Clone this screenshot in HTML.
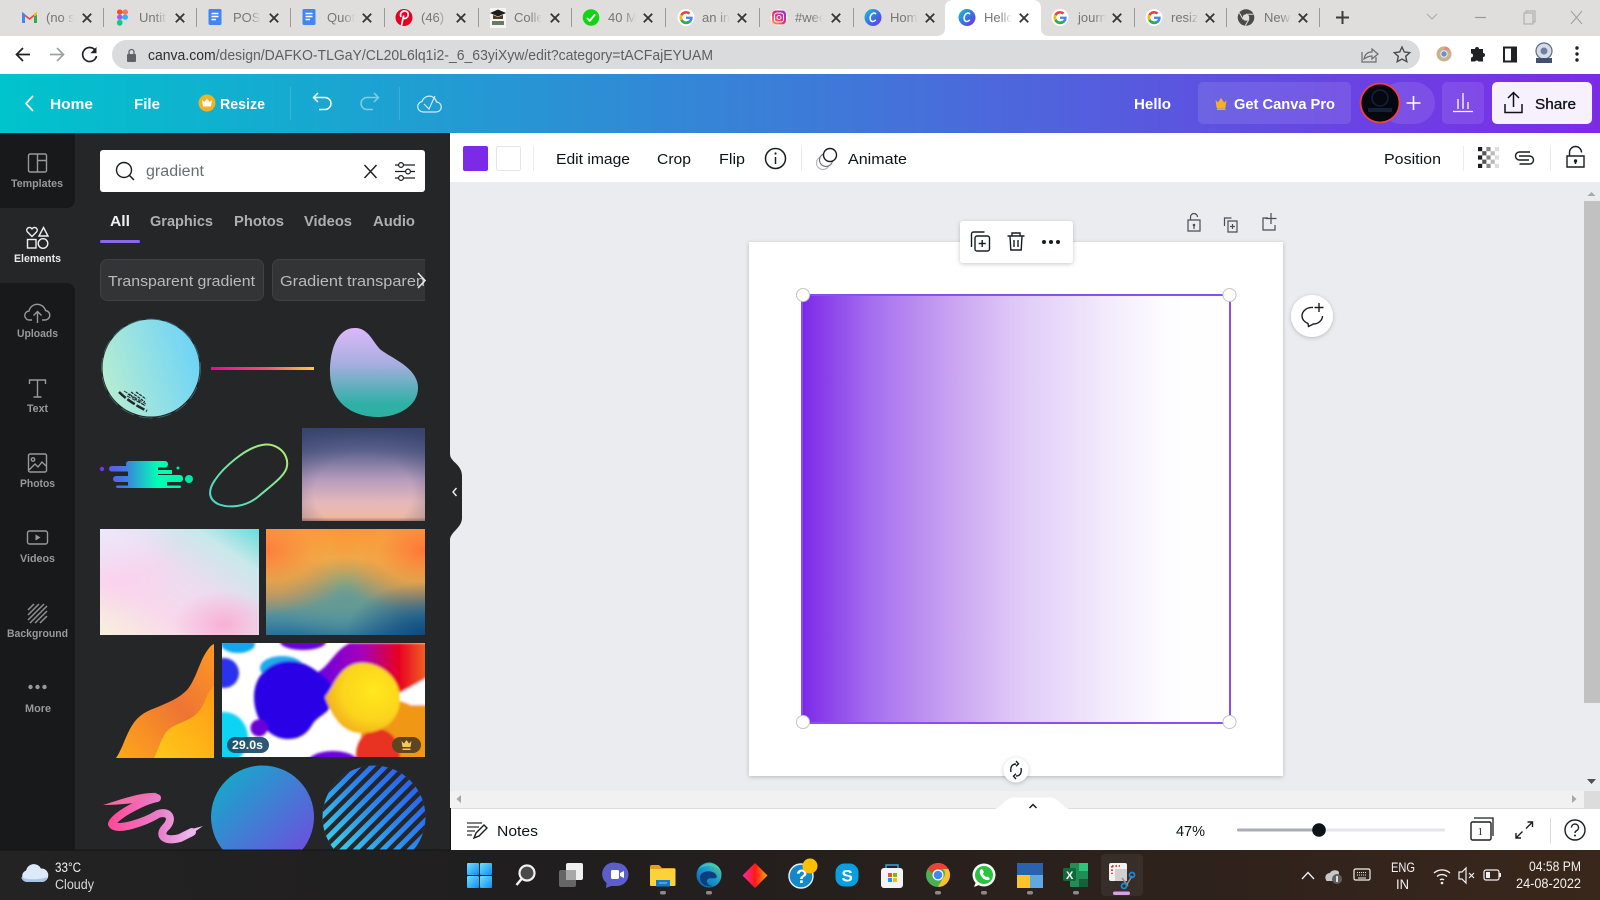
<!DOCTYPE html>
<html lang="en"><head><meta charset="utf-8"><title>Hello - Canva</title>
<style>
html,body{margin:0;padding:0;width:1600px;height:900px;overflow:hidden;background:#ebecf0}
svg{position:absolute;left:0;top:0;display:block}
text{font-family:"Liberation Sans",sans-serif}
.tab{font-size:13px;fill:#767676}
.close{stroke:#333;stroke-width:1.8;fill:none}
.tb{font-size:15px;fill:#0e1318}
.hd{font-size:15px;font-weight:700;fill:#fff}
.sl{font-size:11px;font-weight:700;fill:#98999b}
.ic{fill:none;stroke:#98999b;stroke-width:1.4}
.dk{fill:none;stroke:#1a1d21;stroke-width:1.4}
.gt{fill:none;stroke:#4a4d52;stroke-width:1.2}
.tray{font-size:13.500px;fill:#f2f2f2}
</style></head><body>
<svg width="1600" height="900" viewBox="0 0 1600 900" xmlns="http://www.w3.org/2000/svg">
<defs>
<linearGradient id="hdg" x1="0" x2="1" y1="0" y2="0"><stop offset="0" stop-color="#00c4cc"/><stop offset=".5" stop-color="#3c7cd8"/><stop offset="1" stop-color="#7d2ae8"/></linearGradient>
<linearGradient id="main" x1="0" x2="1" y1="0" y2="0"><stop offset="0" stop-color="#7d2ae8"/><stop offset=".16" stop-color="#a66eef"/><stop offset=".35" stop-color="#c9a4f2"/><stop offset=".5" stop-color="#dfc9f8"/><stop offset=".7" stop-color="#f2e9fc"/><stop offset=".85" stop-color="#fdfcff"/><stop offset="1" stop-color="#fff"/></linearGradient>
<linearGradient id="brush" x1="0" x2="1" y1=".6" y2=".3"><stop offset="0" stop-color="#b6ecd2"/><stop offset="1" stop-color="#6cd3f8"/></linearGradient>
<linearGradient id="line" x1="0" x2="1" y1="0" y2="0"><stop offset="0" stop-color="#f5058a"/><stop offset=".55" stop-color="#f5507a"/><stop offset="1" stop-color="#ffd030"/></linearGradient>
<linearGradient id="blob" x1="0" x2="0" y1="0" y2="1"><stop offset="0" stop-color="#dcb8fa"/><stop offset=".4" stop-color="#a8aee0"/><stop offset=".85" stop-color="#2fb0a6"/><stop offset="1" stop-color="#2cb0a4"/></linearGradient>
<linearGradient id="dash" gradientUnits="userSpaceOnUse" x1="100" x2="193" y1="0" y2="0"><stop offset="0" stop-color="#7b3ff2"/><stop offset=".28" stop-color="#3d7fe0"/><stop offset=".62" stop-color="#00ffb4"/><stop offset="1" stop-color="#00f0a8"/></linearGradient>
<linearGradient id="oval" x1="0" x2="1" y1="1" y2="0"><stop offset="0" stop-color="#40d8d0"/><stop offset="1" stop-color="#b8ee70"/></linearGradient>
<linearGradient id="sun" x1="0" x2="0" y1="0" y2="1"><stop offset="0" stop-color="#3c4870"/><stop offset=".25" stop-color="#5f6590"/><stop offset=".55" stop-color="#b49bbb"/><stop offset=".8" stop-color="#e4b8ba"/><stop offset=".96" stop-color="#efb8a3"/><stop offset="1" stop-color="#b08070"/></linearGradient>
<radialGradient id="sunedge" cx=".5" cy=".7" r=".8"><stop offset=".5" stop-color="#3c4870" stop-opacity="0"/><stop offset="1" stop-color="#34406a" stop-opacity=".6"/></radialGradient>
<linearGradient id="pa" x1="0" x2="1" y1="1" y2="0"><stop offset="0" stop-color="#f8f0dc"/><stop offset=".3" stop-color="#f8d8ec"/><stop offset=".55" stop-color="#ecdcf0"/><stop offset=".8" stop-color="#c8e8ea"/><stop offset="1" stop-color="#68dcdc"/></linearGradient>
<radialGradient id="pb" cx=".78" cy=".9" r=".32"><stop offset="0" stop-color="#f8b0d4"/><stop offset="1" stop-color="#f8b0d4" stop-opacity="0"/></radialGradient>
<radialGradient id="pc" cx="0" cy="0" r=".5"><stop offset="0" stop-color="#ece8fb"/><stop offset="1" stop-color="#ece8fb" stop-opacity="0"/></radialGradient>
<radialGradient id="pd" cx=".1" cy=".4" r=".4"><stop offset="0" stop-color="#fbd2ee"/><stop offset="1" stop-color="#fbd2ee" stop-opacity="0"/></radialGradient>
<linearGradient id="ra" x1="0" x2="0" y1="0" y2="1"><stop offset="0" stop-color="#ffa030"/><stop offset=".28" stop-color="#e8c050"/><stop offset=".48" stop-color="#b0b868"/><stop offset=".65" stop-color="#8aa080"/><stop offset=".85" stop-color="#4a8ca0"/><stop offset="1" stop-color="#2a7098"/></linearGradient>
<radialGradient id="rt" cx=".5" cy=".68" r=".42"><stop offset="0" stop-color="#5f9a98" stop-opacity=".9"/><stop offset="1" stop-color="#5f9a98" stop-opacity="0"/></radialGradient>
<radialGradient id="rb" cx="0" cy=".2" r=".6"><stop offset="0" stop-color="#ff7c3c"/><stop offset=".5" stop-color="#f89840" stop-opacity=".7"/><stop offset="1" stop-color="#ff7c3c" stop-opacity="0"/></radialGradient>
<radialGradient id="rc" cx="1" cy=".2" r=".6"><stop offset="0" stop-color="#ff7438"/><stop offset=".5" stop-color="#f89840" stop-opacity=".7"/><stop offset="1" stop-color="#ff7438" stop-opacity="0"/></radialGradient>
<radialGradient id="rd" cx="1" cy="1" r=".5"><stop offset="0" stop-color="#104a80"/><stop offset="1" stop-color="#104a80" stop-opacity="0"/></radialGradient>
<linearGradient id="wa" x1="0" x2="1" y1="1" y2="0"><stop offset="0" stop-color="#ffa818"/><stop offset=".55" stop-color="#ee7434"/><stop offset="1" stop-color="#ff9a20"/></linearGradient>
<linearGradient id="wb" x1="0" x2="1" y1="1" y2="0"><stop offset="0" stop-color="#ffc818"/><stop offset="1" stop-color="#ff9c18"/></linearGradient>
<linearGradient id="band" x1="0" x2="1" y1="0" y2="0"><stop offset="0" stop-color="#6a00e0"/><stop offset=".4" stop-color="#a800b8"/><stop offset=".72" stop-color="#e80020"/><stop offset="1" stop-color="#f07020"/></linearGradient>
<radialGradient id="yel" cx=".65" cy=".4" r=".7"><stop offset="0" stop-color="#ffe820"/><stop offset=".6" stop-color="#fcd41c"/><stop offset="1" stop-color="#f0a820"/></radialGradient>
<linearGradient id="scr" x1="0" x2="1" y1="0" y2="0"><stop offset="0" stop-color="#ff4c98"/><stop offset=".6" stop-color="#e880cc"/><stop offset="1" stop-color="#ecb8ec"/></linearGradient>
<linearGradient id="cir" x1="0" x2="1" y1="0" y2="1"><stop offset="0" stop-color="#0cb4c8"/><stop offset="1" stop-color="#7844e0"/></linearGradient>
<linearGradient id="str" x1="0" x2="1" y1="1" y2="0"><stop offset="0" stop-color="#40eae0"/><stop offset=".55" stop-color="#2a88f0"/><stop offset="1" stop-color="#2a50f0"/></linearGradient>
<linearGradient id="tbg" x1="0" x2="1" y1="0" y2="0"><stop offset="0" stop-color="#232323"/><stop offset=".35" stop-color="#201e1e"/><stop offset=".75" stop-color="#2e221c"/><stop offset="1" stop-color="#3a271b"/></linearGradient>
<linearGradient id="fade" x1="0" x2="1" y1="0" y2="0"><stop offset="0" stop-color="#dfdedd" stop-opacity="0"/><stop offset="1" stop-color="#dfdedd"/></linearGradient>
<linearGradient id="fadew" x1="0" x2="1" y1="0" y2="0"><stop offset="0" stop-color="#fff" stop-opacity="0"/><stop offset="1" stop-color="#fff"/></linearGradient>
<linearGradient id="cv" x1="0" x2="1" y1="0" y2="1"><stop offset="0" stop-color="#16c4d8"/><stop offset=".55" stop-color="#3a70e0"/><stop offset="1" stop-color="#7d2ae8"/></linearGradient>
<linearGradient id="ig" x1="0" x2="1" y1="1" y2="0"><stop offset="0" stop-color="#fdb03c"/><stop offset=".5" stop-color="#e6287c"/><stop offset="1" stop-color="#7a38d0"/></linearGradient>
<linearGradient id="win" x1="0" x2="1" y1="0" y2="1"><stop offset="0" stop-color="#6fe0ff"/><stop offset="1" stop-color="#0f8cef"/></linearGradient>
<linearGradient id="edge" x1="0" x2="1" y1="1" y2="0"><stop offset="0" stop-color="#0c5fa8"/><stop offset=".55" stop-color="#1a9ad0"/><stop offset="1" stop-color="#60d870"/></linearGradient>
<linearGradient id="dia" x1="0" x2="1" y1=".5" y2=".5"><stop offset="0" stop-color="#ff2aa8"/><stop offset=".5" stop-color="#ff1818"/><stop offset="1" stop-color="#ffa010"/></linearGradient>
<pattern id="lines" width="9.500" height="9.500" patternUnits="userSpaceOnUse" patternTransform="rotate(-45)"><rect width="9.500" height="4.500" fill="#252627"/></pattern>
<filter id="b1"><feGaussianBlur stdDeviation="1.200"/></filter>
<filter id="sh" x="-30%" y="-30%" width="160%" height="160%"><feDropShadow dx="0" dy="1" stdDeviation="2" flood-color="#000" flood-opacity=".22"/></filter>
<clipPath id="vc"><rect x="222" y="643" width="203" height="114"/></clipPath>
<clipPath id="stc"><circle cx="374" cy="817" r="51.500"/></clipPath>
<g id="x"><path class="close" d="M-4.200 -4.200L4.200 4.200M4.200 -4.200L-4.200 4.200"/></g>
<g id="f"><rect x="16" y="0" width="12" height="20" fill="url(#fade)"/><rect x="28" y="0" width="9" height="20" fill="#dfdedd"/></g>
<g id="gg"><circle r="8.500" fill="#fff"/><path d="M6.600-.9H0v2.300h3.900C3.500 3 2 4 0 4a4 4 0 1 1 0-8c1 0 1.900.3 2.600.9L4.300-4.800A6.500 6.500 0 1 0 6.600-.9z" fill="#4285f4"/><path d="M-5.600-3.200L-3.500-1.700A4 4 0 0 1 2.600-3.100L4.300-4.800A6.500 6.500 0 0 0-5.600-3.200z" fill="#ea4335"/><path d="M-5.600 3.200L-3.500 1.600A4 4 0 0 0 2.300 3.300L4.300 4.900A6.500 6.500 0 0 1-5.600 3.200z" fill="#34a853"/><path d="M-5.600-3.200a6.500 6.500 0 0 0 0 6.400L-3.500 1.600a4 4 0 0 1 0-3.300z" fill="#fbbc05"/></g>
<g id="doc"><rect x="-6.500" y="-8" width="13" height="16" rx="1.500" fill="#4285f4"/><path d="M-3.500-3.500h7M-3.500-.5h7M-3.500 2.500h4.500" stroke="#fff" stroke-width="1.400"/></g>
<g id="cv1"><circle r="8.500" fill="url(#cv)"/><path d="M2.800-3.200C2.200-5.200-.8-4.800-2.300-2-3.600 1-2.600 4.200 0 4c1-.1 2-.7 2.800-1.600" fill="none" stroke="#fff" stroke-width="1.500"/></g>
</defs>

<!-- chrome tab strip -->
<rect width="1600" height="36" fill="#dfdedd"/>
<rect y="36" width="1600" height="38" fill="#fff"/>
<g stroke="#9a9a9a" stroke-width="1"><path d="M103.500 8v19M196.500 8v19M290.500 8v19M384.500 8v19M478.500 8v19M571.500 8v19M665.500 8v19M759.500 8v19M853.500 8v19M1134.500 8v19M1226.500 8v19M1319.500 8v19"/></g>
<path d="M937 36c5 0 8-3 8-8V8c0-5 3-8 8-8h80c5 0 8 3 8 8v20c0 5 3 8 8 8z" fill="#fff"/>

<path d="M22 23V12l7.500 6 7.500-6v11h-3v-6.500l-4.500 3.500-4.500-3.500V23z" fill="#ea4335"/><path d="M22 23V12l3 2v9z" fill="#4285f4"/><path d="M34 23v-9l3-2v11z" fill="#34a853"/><path d="M34 14l3-2v3l-3 1.500z" fill="#fbbc05"/>
<text x="46" y="22" class="tab">(no s</text><use href="#f" x="46" y="8"/><use href="#x" x="87" y="18"/>

<g transform="translate(1,3) scale(1 .93)"><rect x="116" y="7" width="5.500" height="5.500" rx="2.700" fill="#f24e1e"/><rect x="121.500" y="7" width="5.500" height="5.500" rx="2.700" fill="#ff7262"/><rect x="116" y="12.500" width="5.500" height="5.500" rx="2.700" fill="#a259ff"/><circle cx="124.200" cy="15.200" r="2.800" fill="#1abcfe"/><rect x="116" y="18" width="5.500" height="6.500" rx="2.700" fill="#0acf83"/></g>
<text x="139" y="22" class="tab">Untit</text><use href="#f" x="139" y="8"/><use href="#x" x="180" y="18"/>

<use href="#doc" x="215" y="17"/>
<text x="233" y="22" class="tab">POST</text><use href="#f" x="233" y="8"/><use href="#x" x="274" y="18"/>

<use href="#doc" x="309" y="17"/>
<text x="327" y="22" class="tab">Quot</text><use href="#f" x="327" y="8"/><use href="#x" x="367" y="18"/>

<circle cx="404" cy="17.500" r="8.500" fill="#e60023"/><path d="M401.500 25.500l2.200-10M401 17c-1.500-3.500.8-6 3.500-6 2.700 0 4 1.800 3.600 4.300-.5 2.500-2.700 4-4.500 2.700" fill="none" stroke="#fff" stroke-width="1.700"/>
<text x="421" y="22" class="tab">(46) F</text><use href="#f" x="421" y="8"/><use href="#x" x="461" y="18"/>

<rect x="490" y="8" width="16" height="20" fill="#f4f4f4"/><path d="M490 13l8-3.500 8 3.500-8 3.500z" fill="#1d1d1d"/><path d="M493 15v4h10v-4l-5 2z" fill="#4b3a24"/><path d="M492 21h12v4h-12z" fill="#6a7a5a"/>
<text x="514" y="22" class="tab">Colle</text><use href="#f" x="514" y="8"/><use href="#x" x="555" y="18"/>

<circle cx="591" cy="17.500" r="8.300" fill="#12d412"/><path d="M587 18l2.800 2.800 5.300-6.500" fill="none" stroke="#fff" stroke-width="1.900"/>
<text x="608" y="22" class="tab">40 M</text><use href="#f" x="608" y="8"/><use href="#x" x="648" y="18"/>

<use href="#gg" x="686" y="17.500"/>
<text x="702" y="22" class="tab">an in</text><use href="#f" x="702" y="8"/><use href="#x" x="742" y="18"/>

<circle cx="779" cy="17.500" r="8.300" fill="#fff"/><rect x="772" y="10.500" width="14" height="14" rx="4" fill="url(#ig)"/><rect x="774.500" y="13" width="9" height="9" rx="2.500" fill="none" stroke="#fff" stroke-width="1.100"/><circle cx="779" cy="17.500" r="2" fill="none" stroke="#fff" stroke-width="1"/>
<text x="795" y="22" class="tab">#wec</text><use href="#f" x="795" y="8"/><use href="#x" x="836" y="18"/>

<use href="#cv1" x="873" y="17.500"/>
<text x="890" y="22" class="tab">Hom</text><use href="#f" x="890" y="8"/><use href="#x" x="930" y="18"/>

<use href="#cv1" x="967" y="17.500"/>
<text x="984" y="22" class="tab">Hello</text><rect x="1000" y="8" width="12" height="20" fill="url(#fadew)"/><rect x="1012" y="8" width="6" height="20" fill="#fff"/><use href="#x" x="1024" y="18"/>

<use href="#gg" x="1060" y="17.500"/>
<text x="1078" y="22" class="tab">journ</text><use href="#f" x="1078" y="8"/><use href="#x" x="1117" y="18"/>

<use href="#gg" x="1154" y="17.500"/>
<text x="1171" y="22" class="tab">resiz</text><use href="#f" x="1171" y="8"/><use href="#x" x="1210" y="18"/>

<circle cx="1246" cy="17.500" r="8.300" fill="#4a4a4a"/><circle cx="1246" cy="17.500" r="3.300" fill="#dfdedd"/><path d="M1246 14.200h7.500M1243 19.200l-3.700-6.400M1249 19.200l-3.700 6.400" stroke="#dfdedd" stroke-width="1" fill="none"/>
<text x="1264" y="22" class="tab">New</text><use href="#f" x="1264" y="8"/><use href="#x" x="1303" y="18"/>

<path d="M1342.500 11v13M1336 17.500h13" stroke="#3c3c3c" stroke-width="2"/>
<path d="M1427 14l5 5 5-5" fill="none" stroke="#a8a8a8" stroke-width="1"/>
<path d="M1475 17.500h11" stroke="#9a9a9a" stroke-width="1.200"/>
<path d="M1524 13h9v11h-9zM1526 13v-2h9v11h-2" fill="none" stroke="#a8a8a8" stroke-width="1"/>
<path d="M1571 11l11 13M1582 11l-11 13" stroke="#a0a0a0" stroke-width="1"/>

<!-- address bar -->
<rect x="112" y="40" width="1308" height="29" rx="14.500" fill="#dadbdc"/>
<path d="M30 54.500H17M23 48l-6.500 6.500L23 61" fill="none" stroke="#202124" stroke-width="1.700"/>
<path d="M50 54.500h13M57 48l6.500 6.500L57 61" fill="none" stroke="#a0a2a4" stroke-width="1.700"/>
<path d="M95 50a7 7 0 1 0 1.500 6" fill="none" stroke="#202124" stroke-width="1.700"/><path d="M96.500 47v6.200h-6.200z" fill="#202124"/>
<rect x="127" y="54" width="9" height="8" rx="1" fill="#5f6368"/><path d="M129 54v-2a2.500 2.500 0 0 1 5 0v2" fill="none" stroke="#5f6368" stroke-width="1.300"/>
<text x="148" y="60" font-size="15" fill="#5c5f63" textLength="565" lengthAdjust="spacingAndGlyphs"><tspan fill="#2c2e31">canva.com</tspan>/design/DAFKO-TLGaY/CL20L6lq1i2-_6_63yiXyw/edit?category=tACFajEYUAM</text>
<path d="M1362 52v10h14v-5M1364 59c1-5 4-7 8-7v-3l6 5-6 5v-3c-3 0-5 1-8 3z" fill="none" stroke="#6a6c70" stroke-width="1.200"/>
<path d="M1402 47l2.300 5 5.400.6-4 3.700 1.100 5.400-4.800-2.700-4.800 2.700 1.100-5.400-4-3.700 5.400-.6z" fill="none" stroke="#4a4c50" stroke-width="1.400"/>
<circle cx="1444" cy="54" r="7.500" fill="#c8b48c"/><path d="M1444 46.500a7.500 7.500 0 0 1 6.500 3.700h-6.500z" fill="#e0907a"/><circle cx="1444" cy="54" r="3.200" fill="#6a90d8" stroke="#eee" stroke-width="1"/>
<path d="M1471 49h4a2 2 0 0 1 4 0h4v4a2 2 0 0 1 0 4v4.500h-4.500a2 2 0 0 0-3.500 0H1471v-4a2 2 0 0 0 0-4z" fill="#1f2123"/>
<rect x="1504" y="47.500" width="12" height="14" fill="none" stroke="#1f2123" stroke-width="2"/><rect x="1511" y="47.500" width="5" height="14" fill="#1f2123"/>
<circle cx="1544" cy="51" r="8" fill="#d7dce8" stroke="#5a6a88" stroke-width="1.200"/><circle cx="1544" cy="51" r="3.500" fill="#6f7f9f"/><rect x="1536" y="58" width="16" height="5" fill="#40506e"/>
<g fill="#202124"><circle cx="1577" cy="48" r="1.700"/><circle cx="1577" cy="54" r="1.700"/><circle cx="1577" cy="60" r="1.700"/></g>

<!-- canva header -->
<rect y="74" width="1600" height="59" fill="url(#hdg)"/>
<path d="M33 96l-7 7.500 7 7.500" fill="none" stroke="#fff" stroke-width="1.700"/>
<text x="50" y="109" class="hd" textLength="43" lengthAdjust="spacingAndGlyphs">Home</text>
<text x="134" y="109" class="hd" textLength="26" lengthAdjust="spacingAndGlyphs">File</text>
<circle cx="207" cy="103" r="8.500" fill="#f6b21e"/><path d="M202 100l2.500 2 2.500-3.500 2.500 3.500 2.500-2-1 6.500h-8z" fill="#fff"/>
<text x="220" y="109" class="hd" textLength="45" lengthAdjust="spacingAndGlyphs">Resize</text>
<path d="M290.500 87v33M399.500 87v33" stroke="#fff" stroke-opacity=".15"/>
<path d="M313 97.500h12a6 6 0 0 1 0 12h-6M318 93l-4.500 4.500 4.500 4.500" fill="none" stroke="#fff" stroke-width="1.500"/>
<path d="M379 97.500h-12a6 6 0 0 0 0 12h6M374 93l4.500 4.500-4.500 4.500" fill="none" stroke="#fff" stroke-opacity=".45" stroke-width="1.500"/>
<path d="M423 112h13a5 5 0 0 0 .5-10 7.500 7.500 0 0 0-14.500-.5 5.300 5.300 0 0 0 1 10.500zM424 104l5 5 6-13" fill="none" stroke="#fff" stroke-opacity=".8" stroke-width="1.200"/>
<text x="1134" y="109" class="hd" textLength="37" lengthAdjust="spacingAndGlyphs">Hello</text>
<rect x="1198" y="82" width="153" height="42" rx="5" fill="#fff" fill-opacity=".1"/>
<path d="M1215.500 100l2.500 2.500 3-4.500 3 4.500 2.500-2-1.200 7.500h-8.600z" fill="#f6b21e"/><rect x="1217" y="108.300" width="8.500" height="1.700" fill="#f6b21e"/>
<text x="1234" y="109" class="hd" textLength="101" lengthAdjust="spacingAndGlyphs">Get Canva Pro</text>
<rect x="1380" y="82" width="55" height="42" rx="21" fill="#fff" fill-opacity=".1"/>
<circle cx="1380" cy="103" r="19.500" fill="#06080f" stroke="#f0404a" stroke-width="1.800"/>
<circle cx="1380" cy="98" r="8" fill="none" stroke="#16223a" stroke-width="1.500"/><rect x="1368" y="108" width="24" height="4" fill="#16223a"/>
<path d="M1413.500 96v14M1406.500 103h14" stroke="#fff" stroke-width="1.600"/>
<rect x="1442" y="82" width="42" height="42" rx="5" fill="#fff" fill-opacity=".1"/>
<path d="M1453 111.500h20M1458 109v-10M1463 109V93M1468 109v-7" stroke="#fff" stroke-width="1.300" fill="none"/>
<rect x="1492" y="82" width="100" height="42" rx="5" fill="#f6f1fd"/>
<path d="M1505 104v8.500h17V104M1513.500 107V93M1508 98l5.500-5.500 5.500 5.500" fill="none" stroke="#0e1318" stroke-width="1.500"/>
<text x="1535" y="109" font-size="15" fill="#0e1318" textLength="41" lengthAdjust="spacingAndGlyphs" stroke="#0e1318" stroke-width=".3">Share</text>

<!-- left sidebar + panel -->
<rect y="133" width="450" height="717" fill="#252627"/>
<path d="M0 133h75v67a8 8 0 0 1-8 8H0z" fill="#18191b"/>
<path d="M0 283h67a8 8 0 0 1 8 8v559H0z" fill="#18191b"/>
<rect x="28.500" y="154" width="18" height="18" rx="1.500" class="ic"/><path d="M37.500 154v18M37.500 160.500h9" class="ic"/>
<text x="11" y="187" class="sl" textLength="52" lengthAdjust="spacingAndGlyphs">Templates</text>
<path d="M32 236.500l-4.600-4.600a2.700 2.700 0 0 1 3.800-3.800l.8.800.8-.8a2.700 2.700 0 0 1 3.800 3.800z" fill="none" stroke="#f0f0f0" stroke-width="1.400"/><path d="M43.500 227.500l4.500 8.500h-9z" fill="none" stroke="#f0f0f0" stroke-width="1.400"/><rect x="27.500" y="239.500" width="8.500" height="8.500" fill="none" stroke="#f0f0f0" stroke-width="1.400"/><circle cx="43" cy="243.500" r="4.800" fill="none" stroke="#f0f0f0" stroke-width="1.400"/>
<text x="14" y="262" class="sl" style="fill:#ececec" textLength="47" lengthAdjust="spacingAndGlyphs">Elements</text>
<path d="M32 320h-2.500a4.500 4.500 0 0 1-.5-9 8.500 8.500 0 0 1 16.500-.5 4.700 4.700 0 0 1-1 9.500h-2.500M37.500 323v-11M33.500 315.500l4-4 4 4" class="ic"/>
<text x="17" y="337" class="sl" textLength="41" lengthAdjust="spacingAndGlyphs">Uploads</text>
<path d="M29.500 384v-4h16v4M37.500 380v17M33.500 397h8" class="ic"/>
<text x="27" y="412" class="sl" textLength="21" lengthAdjust="spacingAndGlyphs">Text</text>
<rect x="28.500" y="454" width="18" height="18" rx="1.500" class="ic"/><circle cx="33" cy="459.500" r="1.700" class="ic"/><path d="M29 470l6-6 3 3 4-5 4 4" class="ic"/>
<text x="20" y="487" class="sl" textLength="35" lengthAdjust="spacingAndGlyphs">Photos</text>
<rect x="27.500" y="531" width="20" height="13" rx="2" class="ic"/><path d="M35.500 534.500l5 3-5 3z" fill="#98999b"/>
<text x="20" y="562" class="sl" textLength="35" lengthAdjust="spacingAndGlyphs">Videos</text>
<path d="M28 610l6-6M28 615l11-11M28 620l16-16M30 623l17-17M35 623l12-12M40 623l7-7" stroke="#909193" stroke-width="1.500" fill="none"/>
<text x="7" y="637" class="sl" textLength="61" lengthAdjust="spacingAndGlyphs">Background</text>
<g fill="#98999b"><circle cx="30.500" cy="687" r="2.200"/><circle cx="37.500" cy="687" r="2.200"/><circle cx="44.500" cy="687" r="2.200"/></g>
<text x="25" y="712" class="sl" textLength="26" lengthAdjust="spacingAndGlyphs">More</text>

<rect x="100" y="150" width="325" height="42" rx="3" fill="#fff"/>
<circle cx="124" cy="170" r="7.500" fill="none" stroke="#1a1d21" stroke-width="1.400"/><path d="M129.500 175.500l4.500 4.500" stroke="#1a1d21" stroke-width="1.500"/>
<text x="146" y="176" font-size="15.500" fill="#6a6d72" textLength="58" lengthAdjust="spacingAndGlyphs">gradient</text>
<path d="M364.500 165l12 13M376.500 165l-12 13" stroke="#1a1d21" stroke-width="1.400"/>
<path d="M395 165h20M395 171.500h20M395 178h20" stroke="#1a1d21" stroke-width="1.200"/><circle cx="401" cy="165" r="2.400" fill="#fff" stroke="#1a1d21" stroke-width="1.200"/><circle cx="408" cy="171.500" r="2.400" fill="#fff" stroke="#1a1d21" stroke-width="1.200"/><circle cx="401" cy="178" r="2.400" fill="#fff" stroke="#1a1d21" stroke-width="1.200"/>

<g font-size="15" font-weight="700" fill="#aeafb1">
<text x="110" y="226" fill="#f0f0f0" textLength="20" lengthAdjust="spacingAndGlyphs">All</text>
<text x="150" y="226" textLength="63" lengthAdjust="spacingAndGlyphs">Graphics</text>
<text x="234" y="226" textLength="50" lengthAdjust="spacingAndGlyphs">Photos</text>
<text x="304" y="226" textLength="48" lengthAdjust="spacingAndGlyphs">Videos</text>
<text x="373" y="226" textLength="42" lengthAdjust="spacingAndGlyphs">Audio</text>
</g>
<rect x="100" y="240" width="40" height="3" rx="1.500" fill="#8a68e8"/>

<rect x="100.500" y="259.500" width="163" height="41" rx="7" fill="#333436" stroke="#404143"/>
<rect x="272.500" y="259.500" width="170" height="41" rx="7" fill="#333436" stroke="#404143"/>
<text x="108" y="286" font-size="15" fill="#b9babc" textLength="147" lengthAdjust="spacingAndGlyphs">Transparent gradient</text>
<text x="280" y="286" font-size="15" fill="#b9babc" textLength="145" lengthAdjust="spacingAndGlyphs">Gradient transparen</text>
<rect x="425" y="250" width="25" height="60" fill="#252627"/>
<path d="M418 273l7 7.500-7 7.500" fill="none" stroke="#e8e8e8" stroke-width="1.600"/>

<!-- grid row 1 -->
<circle cx="151" cy="368" r="48.500" fill="url(#brush)"/>
<circle cx="151" cy="368.500" r="49.500" fill="none" stroke="#3f6670" stroke-width=".8" stroke-dasharray="14 5"/>
<path d="M119 392c8 8 18 14 28 19" stroke="#252627" stroke-width="2.500" stroke-dasharray="9 2" fill="none"/>
<path d="M124 391l22 13M127 396l19 10" stroke="#30363a" stroke-width="1" fill="none" stroke-dasharray="4 1.500"/>
<path d="M128 394l16 11M131 392l14 10M136 392l10 7" stroke="#23282c" stroke-width="1.200" stroke-dasharray="3 1" fill="none"/>
<rect x="211" y="367" width="103" height="3" fill="url(#line)"/>
<path d="M355 328c14 0 18 15 26 22 12 9 37 18 37 38 0 18-20 29-40 29-24 0-48-13-48-45 0-22 7-44 25-44z" fill="url(#blob)"/>

<!-- row 2 -->
<circle cx="102" cy="469" r="2.200" fill="#7b2ff7"/><circle cx="178" cy="468" r="1.500" fill="#00e8a8"/><circle cx="189" cy="479" r="4" fill="#00e8a8"/>
<g fill="url(#dash)">
<rect x="126" y="461" width="42" height="6.500" rx="3"/>
<rect x="109" y="466" width="30" height="5.500" rx="2.700"/>
<rect x="128" y="461" width="30" height="24"/>
<rect x="150" y="470" width="22" height="4"/>
<rect x="113" y="476" width="20" height="6" rx="3"/>
<rect x="128" y="475" width="55" height="7" rx="3"/>
<rect x="128" y="482" width="39" height="3.500"/>
<rect x="116" y="485.500" width="65" height="2.500" rx="1.200"/>
</g>
<path d="M262 445c14-3 27 8 25 21-1 9-14 18-28 30-14 12-31 12-41 8-10-5-10-14-3-24 8-12 30-32 47-35z" fill="none" stroke="url(#oval)" stroke-width="2"/>
<rect x="302" y="428" width="123" height="93" fill="url(#sun)"/><rect x="302" y="428" width="123" height="93" fill="url(#sunedge)"/>

<!-- row 3 -->
<rect x="100" y="529" width="159" height="106" fill="url(#pa)"/><rect x="100" y="529" width="159" height="106" fill="url(#pd)"/><rect x="100" y="529" width="159" height="106" fill="url(#pb)"/><rect x="100" y="529" width="159" height="106" fill="url(#pc)"/>
<rect x="266" y="529" width="159" height="106" fill="url(#ra)"/><rect x="266" y="529" width="159" height="106" fill="url(#rt)"/><rect x="266" y="529" width="159" height="106" fill="url(#rb)"/><rect x="266" y="529" width="159" height="106" fill="url(#rc)"/><rect x="266" y="529" width="159" height="106" fill="url(#rd)"/>

<!-- row 4 -->
<path d="M116 758c6-8 10-24 17-34 8-12 18-14 27-18 12-5 20-9 27-16 8-9 12-26 18-36 3-5 6-9 9-10v114z" fill="url(#wa)"/>
<path d="M154 758c4-7 7-20 13-27 6-6 15-8 24-13 7-4 11-10 14-17 2-6 5-11 9-15v72z" fill="url(#wb)"/>
<g clip-path="url(#vc)">
<rect x="222" y="643" width="203" height="114" fill="#fff"/>
<g filter="url(#b1)">
<ellipse cx="238" cy="644" rx="17" ry="9" fill="#10a8f0"/>
<circle cx="224" cy="673" r="15" fill="#2a30f0"/>
<ellipse cx="224" cy="738" rx="24" ry="26" fill="#10d4f4"/>
<ellipse cx="303" cy="642" rx="23" ry="8" fill="#6a00d8"/>
<ellipse cx="282" cy="668" rx="22" ry="12" fill="#20a8f0"/>
<path d="M318 672C330 665 335 650 350 643H430V678L400 693 380 700 330 690z" fill="url(#band)"/>
<path d="M430 676l-30 17 8 20 22-4z" fill="#fff"/>
<circle cx="395" cy="735" r="34" fill="#f09818"/>
<rect x="400" y="705" width="30" height="55" fill="#f09818"/>
<ellipse cx="378" cy="755" rx="22" ry="26" fill="#e83020"/>
<path d="M254 697c0-22 16-36 36-36 14 0 24 8 32 14 8 6 16 14 12 26-6 14-16 14-22 24-5 9-13 14-24 14-20 0-34-20-34-42z" fill="#2a00e6"/>
<path d="M325 697c8-8 14-34 37-34 22 0 38 18 38 35 0 22-16 35-38 35-18 0-29-14-37-36z" fill="url(#yel)"/>
<ellipse cx="333" cy="762" rx="25" ry="11" fill="#6a00e0"/>
<circle cx="259" cy="728" r="8.500" fill="#6a00d8"/>
</g>
</g>
<rect x="227" y="737" width="42" height="16" rx="8" fill="#1b4a68" fill-opacity=".92"/>
<text x="232" y="749" font-size="12" font-weight="700" fill="#fff" textLength="31" lengthAdjust="spacingAndGlyphs">29.0s</text>
<rect x="392" y="737" width="29" height="16" rx="8" fill="#5e4420"/>
<path d="M401.500 741l2.500 2.500 2.500-3.500 2.500 3.500 2.500-2.500-1 6h-8z" fill="#f8c850"/><rect x="402.500" y="748.500" width="8" height="1.500" fill="#f8c850"/>

<!-- row 5 -->
<path d="M103 805C120 800 140 792 157 793L150 801C135 803 120 805 103 805z" fill="#f26ea8"/>
<path d="M157 798C145 800 115 815 112 824 116 832 145 822 158 814 170 810 174 820 165 828 158 836 165 842 180 838L192 832" fill="none" stroke="url(#scr)" stroke-width="8" stroke-linejoin="round" stroke-linecap="round"/>
<path d="M188 830L203 826 186 838z" fill="#ecb8ec"/>
<circle cx="262.500" cy="817" r="51.500" fill="url(#cir)"/>
<g clip-path="url(#stc)"><rect x="322" y="765" width="104" height="104" fill="url(#str)"/><rect x="322" y="765" width="104" height="104" fill="url(#lines)"/></g>

<!-- panel handle -->
<path d="M450 454c0 8 12 10 12 22v42c0 10-12 14-12 22z" fill="#252627"/>
<path d="M456.500 488l-3.500 4 3.500 4" fill="none" stroke="#f0f0f0" stroke-width="1.400"/>

<!-- toolbar -->
<rect x="450" y="133" width="1150" height="49" fill="#fff"/>
<rect x="463" y="146" width="25" height="25" rx="2" fill="#7d2ae8"/>
<rect x="496.500" y="146.500" width="24" height="24" rx="2" fill="#fff" stroke="#e4e5e8"/>
<path d="M533.500 146v25M801.500 146v25M1463.500 146v25M1550.500 146v25" stroke="#ebecee"/>
<text x="556" y="164" class="tb" textLength="74" lengthAdjust="spacingAndGlyphs">Edit image</text>
<text x="657" y="164" class="tb" textLength="34" lengthAdjust="spacingAndGlyphs">Crop</text>
<text x="719" y="164" class="tb" textLength="26" lengthAdjust="spacingAndGlyphs">Flip</text>
<circle cx="775.500" cy="158.500" r="10" fill="none" stroke="#1a1d21" stroke-width="1.500"/><path d="M775.500 157v7" stroke="#1a1d21" stroke-width="1.500"/><circle cx="775.500" cy="153.500" r="1.100" fill="#1a1d21"/>
<circle cx="823" cy="163" r="6.500" fill="none" stroke="#b8b9bc" stroke-width="1.200"/><circle cx="826" cy="160" r="6.500" fill="#fff" stroke="#777" stroke-width="1.200"/><circle cx="830" cy="155" r="6.500" fill="#fff" stroke="#1a1d21" stroke-width="1.400"/>
<text x="848" y="164" class="tb" textLength="59" lengthAdjust="spacingAndGlyphs">Animate</text>
<text x="1384" y="164" class="tb" textLength="57" lengthAdjust="spacingAndGlyphs">Position</text>
<g fill="#1a1d21"><rect x="1478" y="147" width="4.200" height="4.200"/><rect x="1478" y="155.400" width="4.200" height="4.200"/><rect x="1478" y="163.800" width="4.200" height="4.200"/></g>
<g fill="#555"><rect x="1482.200" y="151.200" width="4.200" height="4.200"/><rect x="1482.200" y="159.600" width="4.200" height="4.200"/></g>
<g fill="#888"><rect x="1486.400" y="147" width="4.200" height="4.200"/><rect x="1486.400" y="155.400" width="4.200" height="4.200"/><rect x="1486.400" y="163.800" width="4.200" height="4.200"/></g>
<g fill="#bbb"><rect x="1490.600" y="151.200" width="4.200" height="4.200"/><rect x="1490.600" y="159.600" width="4.200" height="4.200"/></g>
<g fill="#ddd"><rect x="1494.800" y="147" width="4.200" height="4.200"/><rect x="1494.800" y="155.400" width="4.200" height="4.200"/><rect x="1494.800" y="163.800" width="4.200" height="4.200"/></g>
<path d="M1530 152h-10.500a4 4 0 0 0 0 8h9.500M1519 156h10.500a4 4 0 0 1 0 8h-10" class="dk"/>
<path d="M1567 156h17v11h-17zM1569.500 156v-3.500a6 6 0 0 1 12 0" class="dk"/><path d="M1575.500 164v-3.500" stroke="#1a1d21" stroke-width="1.500"/><circle cx="1575.500" cy="161" r="1.700" fill="#1a1d21"/>

<!-- canvas -->
<rect x="749" y="242" width="534" height="534" fill="#fff" filter="url(#sh)"/>
<rect x="803" y="296" width="427" height="427" fill="url(#main)"/>
<rect x="802" y="295" width="428" height="428" fill="none" stroke="#8b4ff0" stroke-width="2"/>
<g fill="#fff" stroke="#c4c5c8" stroke-width="1"><circle cx="803" cy="295" r="6.500"/><circle cx="1229.500" cy="295" r="6.500"/><circle cx="803" cy="722" r="6.500"/><circle cx="1229.500" cy="722" r="6.500"/></g>

<g class="gt">
<path d="M1188 220h12v11h-12zM1190.500 220v-3a3.500 3.500 0 0 1 7 0"/><path d="M1194 226v3"/>
<path d="M1224.500 226v-8h7M1228 221h9v11h-9zM1232.500 224v5M1230 226.500h5"/>
<path d="M1268 218h-5v12h12v-5M1271 213v11M1265.500 218.500h11"/>
</g>
<circle cx="1194" cy="225" r="1.300" fill="#4a4d52"/>

<rect x="960" y="221" width="113" height="42" rx="3" fill="#fff" filter="url(#sh)"/>
<path d="M971.500 247v-13a2 2 0 0 1 2-2h11" class="dk"/><rect x="975" y="236" width="14.500" height="15" rx="2" class="dk"/><path d="M982.200 240v7M978.700 243.500h7" class="dk"/>
<path d="M1007.500 236h17M1012 236v-3h8v3M1010 236l.8 14h10.400l.8-14M1014 240v7M1018 240v7" class="dk"/>
<g fill="#1a1d21"><circle cx="1044" cy="242" r="2"/><circle cx="1051" cy="242" r="2"/><circle cx="1058" cy="242" r="2"/></g>

<circle cx="1312" cy="316" r="21" fill="#fff" filter="url(#sh)"/>
<path d="M1313 307.500c-6-.5-11 3.500-11 8.500 0 3.500 2.500 6 6 7.500l.5 3 5-2.500c5 0 9-4 9-8" class="dk"/><path d="M1319 303v9M1314.500 307.500h9" class="dk"/>

<circle cx="1016" cy="770" r="12.500" fill="#fff" filter="url(#sh)"/>
<path d="M1011 772c-1-5 1-8 5-8M1016 761l2.500 2.800-2.500 2.500M1021 768c1 5-1 8-5 8M1016 779l-2.500-2.800 2.500-2.500" class="dk"/>

<!-- scrollbars -->
<rect x="1584" y="182" width="16" height="627" fill="#ebecf0"/>
<rect x="1584" y="201" width="16" height="502" fill="#c1c1c1"/>
<path d="M1591.500 192l-4 4h8z" fill="#a8a8a8"/><path d="M1587 779h9l-4.500 5z" fill="#505050"/>
<rect x="450" y="791" width="1134" height="17" fill="#f1f1f1"/>
<rect x="1584" y="791" width="16" height="18" fill="#dcdcdc"/>
<path d="M461 795v8l-4.500-4z" fill="#a8a8a8"/><path d="M1572 795v8l4.500-4z" fill="#a8a8a8"/>

<!-- bottom bar -->
<rect x="450" y="808" width="1150" height="42" fill="#fff"/>
<path d="M450 808.500h1150" stroke="#dcdde0"/>
<path d="M991 809.500c12 0 12-12 24-12h34c12 0 12 12 24 12z" fill="#fff"/>
<path d="M1029.500 808l3.500-3.500 3.500 3.500" fill="none" stroke="#1a1d21" stroke-width="1.500"/>
<path d="M467 823h15M467 827h12M467 831h8M467 835h5" stroke="#333" stroke-width="1.300" fill="none"/>
<path d="M474 838l2-5 8-8 3 3-8 8z" class="dk"/>
<text x="497" y="836" class="tb" textLength="41" lengthAdjust="spacingAndGlyphs">Notes</text>
<text x="1176" y="836" class="tb" textLength="29" lengthAdjust="spacingAndGlyphs">47%</text>
<rect x="1237" y="828.500" width="208" height="3" rx="1.500" fill="#e4e5e8"/><rect x="1237" y="828.500" width="82" height="3" rx="1.500" fill="#a8acb4"/>
<circle cx="1319" cy="830" r="6.800" fill="#0e1318"/>
<rect x="1471" y="822" width="20" height="18" rx="1.500" fill="#fff" stroke="#1a1d21" stroke-width="1.400"/>
<path d="M1474 818h19v18" fill="none" stroke="#1a1d21" stroke-width="1.300"/>
<text x="1477.500" y="835" font-size="11" fill="#1a1d21" style="font-family:'Liberation Serif',serif">1</text>
<path d="M1516 838l6.500-6.500M1516 833v5h5M1532.500 822l-6.500 6.500M1527.500 822h5v5" class="dk"/>
<path d="M1550.500 818v25" stroke="#d8d9dc"/>
<circle cx="1575" cy="830" r="10" class="dk"/><path d="M1571.500 827.500a3.500 3.500 0 1 1 5 3.200c-1 .5-1.500 1-1.500 2.300" class="dk"/><circle cx="1575" cy="835.500" r="1" fill="#1a1d21"/>

<!-- taskbar -->
<rect y="850" width="1600" height="50" fill="url(#tbg)"/>
<path d="M0 850h450" stroke="#141414"/>
<path d="M450.500 808v42" stroke="#111"/>
<path d="M27 882a6 6 0 0 1-1-11.500 8 8 0 0 1 15-2a6.500 6.500 0 0 1 1 13.500z" fill="#dde9f8"/><path d="M21 877c5 3 20 3 26 0-.5 3-2 5-5 5H27c-3 0-5-2-6-5z" fill="#a8c4e8"/>
<text x="55" y="872" font-size="13.500" fill="#f2f2f2" textLength="26" lengthAdjust="spacingAndGlyphs">33°C</text>
<text x="55" y="889" font-size="13.500" fill="#d8d8d8" textLength="39" lengthAdjust="spacingAndGlyphs">Cloudy</text>

<g fill="url(#win)"><rect x="467" y="863" width="12" height="12" rx="1"/><rect x="480" y="863" width="12" height="12" rx="1"/><rect x="467" y="876" width="12" height="12" rx="1"/><rect x="480" y="876" width="12" height="12" rx="1"/></g>
<circle cx="527" cy="873" r="7.500" fill="#4a4a4a" stroke="#f2f2f2" stroke-width="2.200"/><path d="M521.500 879l-5 6" stroke="#f2f2f2" stroke-width="2.500"/>
<rect x="559" y="870" width="17" height="17" rx="2" fill="#666"/><rect x="566" y="863" width="17" height="17" rx="2" fill="#f0f0f0"/><rect x="566" y="870" width="10" height="10" fill="#a8a8a8"/>
<path d="M617 863a11.500 11.500 0 0 1 0 23h-6l-5 2 .5-5a11.500 11.500 0 0 1 10.500-20z" fill="#5b5fc7"/><rect x="611" y="870" width="8" height="9" rx="1.500" fill="#fff"/><path d="M620 873l4-2v7l-4-2z" fill="#fff"/>
<path d="M650 867a2 2 0 0 1 2-2h7l3 3h12a1.500 1.500 0 0 1 1.500 1.500V871h-25.500z" fill="#e0a020"/><rect x="650" y="869" width="25.500" height="17" rx="1" fill="#fbd23a"/><rect x="656" y="880" width="14" height="6.500" fill="#1478c8"/><path d="M659 883h8" stroke="#8cc4f0" stroke-width="1"/>
<circle cx="709" cy="875" r="12.500" fill="url(#edge)"/><path d="M700 876c3-7 16-6 17 1-3 3-6 0-9 2-3 2 0 7 5 7-7 2-14-3-13-10z" fill="#0a3f80"/><path d="M722 874a13 13 0 0 0-24-4c6-6 20-6 24 4z" fill="#3ed8c8" opacity=".6"/>
<path d="M755 863l12.500 12.500L755 888l-12.500-12.500z" fill="url(#dia)"/>
<circle cx="801" cy="876" r="12" fill="#1488c8" stroke="#e8f4ff" stroke-width="1.400"/><text x="796" y="883" font-size="19" font-weight="700" fill="#fff">?</text><circle cx="810" cy="866" r="7.500" fill="#ffc000"/>
<rect x="835.500" y="863.500" width="23" height="23" rx="9" fill="#0a9fe0"/><text x="841.500" y="881.500" font-size="17" font-weight="700" fill="#fff">S</text>
<rect x="881" y="868" width="22" height="20" rx="3" fill="#f4f4f4"/><path d="M886 868v-3h12v3" fill="none" stroke="#2aa8e8" stroke-width="1.500"/><rect x="888" y="873" width="4" height="4" fill="#f25022"/><rect x="893" y="873" width="4" height="4" fill="#7fba00"/><rect x="888" y="878" width="4" height="4" fill="#00a4ef"/><rect x="893" y="878" width="4" height="4" fill="#ffb900"/>
<circle cx="938" cy="875" r="12" fill="#4caf50"/><path d="M938 863a12 12 0 0 1 10.400 6H938a6 6 0 0 0-5.800 4.500L928 869a12 12 0 0 1 10-6z" fill="#ea4335"/><path d="M948.400 869a12 12 0 0 1-10.400 18l5-9a6 6 0 0 0 0-9z" fill="#fbc02d"/><circle cx="938" cy="875" r="5.500" fill="#fff"/><circle cx="938" cy="875" r="4.300" fill="#4285f4"/>
<circle cx="984" cy="875" r="11.500" fill="#fff"/><circle cx="984" cy="875" r="9" fill="#29c43f"/><path d="M980 870c-1 3 1 7 4 9 3 2 5 1 6 0l-2-2.500-1.500.5c-1.500-.5-3-2-3.500-3.500l1-1.500-2-3z" fill="#fff"/><path d="M974 887l2-5 3 3z" fill="#fff"/>
<rect x="1017" y="863" width="26" height="25" fill="#2a62b0"/><rect x="1017" y="875" width="13" height="13" fill="#fcc32c"/><rect x="1030" y="875" width="13" height="13" fill="#62a8e0"/>
<rect x="1070" y="863" width="18" height="24" rx="1" fill="#1f8f55"/><rect x="1079" y="863" width="9" height="8" fill="#2fc27a"/><rect x="1079" y="879" width="9" height="8" fill="#15603a"/><rect x="1063" y="868" width="13" height="13" rx="1.500" fill="#0f6a3c"/><text x="1066" y="879" font-size="11" font-weight="700" fill="#fff">X</text>
<rect x="1101" y="854" width="42" height="42" rx="4" fill="#fff" fill-opacity=".06"/>
<rect x="1109" y="863" width="18" height="18" rx="2" fill="#f2f2f2"/><path d="M1112 866h8M1112 866v8" stroke="#d81818" stroke-width="1.600" stroke-dasharray="1.600 1.800"/><rect x="1115" y="869" width="12" height="12" fill="#d0d0d0"/><path d="M1122 878l6 8M1132 876l-6 10" stroke="#909090" stroke-width="1.500"/><circle cx="1132" cy="875" r="2.500" fill="none" stroke="#1a8ad8" stroke-width="1.700"/><circle cx="1124" cy="886" r="2.500" fill="none" stroke="#1a8ad8" stroke-width="1.700"/>
<g fill="#8a8a8a"><rect x="660" y="891" width="6" height="3.500" rx="1.700"/><rect x="706" y="891" width="6" height="3.500" rx="1.700"/><rect x="935" y="891" width="6" height="3.500" rx="1.700"/><rect x="981" y="891" width="6" height="3.500" rx="1.700"/><rect x="1027" y="891" width="6" height="3.500" rx="1.700"/><rect x="1073" y="891" width="6" height="3.500" rx="1.700"/></g>
<rect x="1113" y="891.500" width="17" height="3.500" rx="1.700" fill="#d8a0e8"/>

<path d="M1302 879l6-6.500 6 6.500" fill="none" stroke="#f0f0f0" stroke-width="1.300"/>
<path d="M1326 880c-2-4 1-7 4-7 1-3 7-4 9-1l-1 9h-10c-1 0-2 0-2-1z" fill="#c8c8c8"/><circle cx="1337" cy="879" r="5" fill="#606060"/><rect x="1336" y="876" width="2" height="6" fill="#ddd"/>
<rect x="1354" y="869" width="16" height="11" rx="1.500" fill="none" stroke="#f0f0f0" stroke-width="1.200"/><path d="M1357 872.500h10M1357 875h10" stroke="#f0f0f0" stroke-dasharray="1 1"/><path d="M1358 878h8" stroke="#f0f0f0"/>
<text x="1391" y="872" class="tray" textLength="24" lengthAdjust="spacingAndGlyphs">ENG</text>
<text x="1396" y="889" class="tray" textLength="13" lengthAdjust="spacingAndGlyphs">IN</text>
<path d="M1434 873a12 12 0 0 1 16 0M1437 876.500a7.500 7.500 0 0 1 10 0M1440 880a3 3 0 0 1 4 0" fill="none" stroke="#f0f0f0" stroke-width="1.400"/><circle cx="1442" cy="883" r="1.300" fill="#f0f0f0"/>
<path d="M1459 872h3l4-4v15l-4-4h-3zM1469 873l5 5M1474 873l-5 5" fill="none" stroke="#f0f0f0" stroke-width="1.200"/>
<rect x="1484" y="870" width="15" height="10" rx="2" fill="none" stroke="#f0f0f0" stroke-width="1.200"/><rect x="1486" y="872" width="4" height="6" fill="#f0f0f0"/><rect x="1499.500" y="873" width="1.500" height="4" fill="#f0f0f0"/>
<text x="1529" y="871" class="tray" textLength="52" lengthAdjust="spacingAndGlyphs">04:58 PM</text>
<text x="1516" y="888" class="tray" textLength="65" lengthAdjust="spacingAndGlyphs">24-08-2022</text>
</svg>
</body></html>
